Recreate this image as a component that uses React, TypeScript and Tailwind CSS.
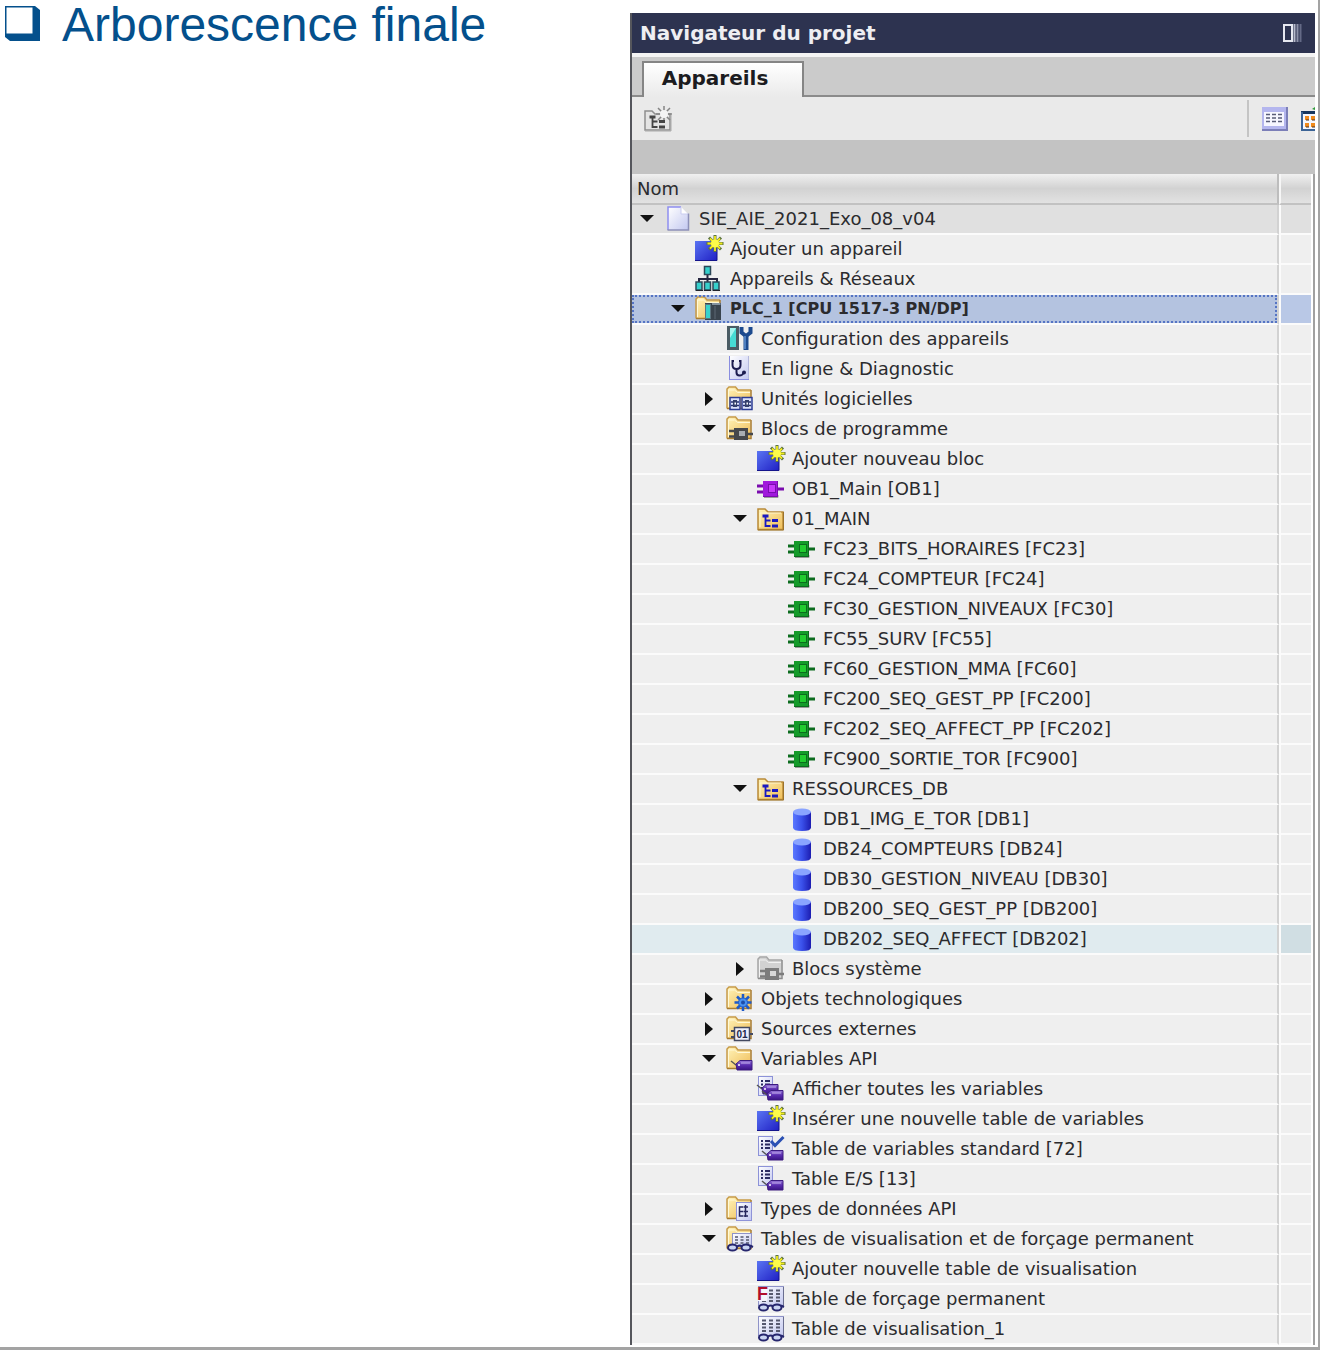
import { ReactNode, useState } from "react";
import clsx from "clsx";

type IconName =
  | "project"
  | "add"
  | "network"
  | "plc"
  | "config"
  | "diagnostic"
  | "units"
  | "blocks"
  | "ob"
  | "fc"
  | "db"
  | "group"
  | "system"
  | "techno"
  | "sources"
  | "tags"
  | "allTags"
  | "stdTable"
  | "tagTable"
  | "types"
  | "watchFolder"
  | "forceTable"
  | "watchTable";

interface TreeNode {
  name: string;
  icon: IconName;
  depth: number;
  arrow?: "open" | "closed";
}

const nodes: TreeNode[] = [
  { name: "SIE_AIE_2021_Exo_08_v04", icon: "project", depth: 0, arrow: "open" },
  { name: "Ajouter un appareil", icon: "add", depth: 1 },
  { name: "Appareils & Réseaux", icon: "network", depth: 1 },
  { name: "PLC_1 [CPU 1517-3 PN/DP]", icon: "plc", depth: 1, arrow: "open" },
  { name: "Configuration des appareils", icon: "config", depth: 2 },
  { name: "En ligne & Diagnostic", icon: "diagnostic", depth: 2 },
  { name: "Unités logicielles", icon: "units", depth: 2, arrow: "closed" },
  { name: "Blocs de programme", icon: "blocks", depth: 2, arrow: "open" },
  { name: "Ajouter nouveau bloc", icon: "add", depth: 3 },
  { name: "OB1_Main [OB1]", icon: "ob", depth: 3 },
  { name: "01_MAIN", icon: "group", depth: 3, arrow: "open" },
  { name: "FC23_BITS_HORAIRES [FC23]", icon: "fc", depth: 4 },
  { name: "FC24_COMPTEUR [FC24]", icon: "fc", depth: 4 },
  { name: "FC30_GESTION_NIVEAUX [FC30]", icon: "fc", depth: 4 },
  { name: "FC55_SURV [FC55]", icon: "fc", depth: 4 },
  { name: "FC60_GESTION_MMA [FC60]", icon: "fc", depth: 4 },
  { name: "FC200_SEQ_GEST_PP [FC200]", icon: "fc", depth: 4 },
  { name: "FC202_SEQ_AFFECT_PP [FC202]", icon: "fc", depth: 4 },
  { name: "FC900_SORTIE_TOR [FC900]", icon: "fc", depth: 4 },
  { name: "RESSOURCES_DB", icon: "group", depth: 3, arrow: "open" },
  { name: "DB1_IMG_E_TOR [DB1]", icon: "db", depth: 4 },
  { name: "DB24_COMPTEURS [DB24]", icon: "db", depth: 4 },
  { name: "DB30_GESTION_NIVEAU [DB30]", icon: "db", depth: 4 },
  { name: "DB200_SEQ_GEST_PP [DB200]", icon: "db", depth: 4 },
  { name: "DB202_SEQ_AFFECT [DB202]", icon: "db", depth: 4 },
  { name: "Blocs système", icon: "system", depth: 3, arrow: "closed" },
  { name: "Objets technologiques", icon: "techno", depth: 2, arrow: "closed" },
  { name: "Sources externes", icon: "sources", depth: 2, arrow: "closed" },
  { name: "Variables API", icon: "tags", depth: 2, arrow: "open" },
  { name: "Afficher toutes les variables", icon: "allTags", depth: 3 },
  { name: "Insérer une nouvelle table de variables", icon: "add", depth: 3 },
  { name: "Table de variables standard [72]", icon: "stdTable", depth: 3 },
  { name: "Table E/S [13]", icon: "tagTable", depth: 3 },
  { name: "Types de données API", icon: "types", depth: 2, arrow: "closed" },
  { name: "Tables de visualisation et de forçage permanent", icon: "watchFolder", depth: 2, arrow: "open" },
  { name: "Ajouter nouvelle table de visualisation", icon: "add", depth: 3 },
  { name: "Table de forçage permanent", icon: "forceTable", depth: 3 },
  { name: "Table de visualisation_1", icon: "watchTable", depth: 3 },
];

const indent = ["pl-0", "pl-[31px]", "pl-[62px]", "pl-[93px]", "pl-[124px]"];

// gradients shared by all the icons of the page
const IconDefs = () => (
  <svg className="absolute h-0 w-0" aria-hidden="true">
    <defs>
      <linearGradient id="gFolder" x1="0" y1="0" x2="1" y2="1">
        <stop offset="0" stopColor="#fff3b8" />
        <stop offset="1" stopColor="#efbd58" />
      </linearGradient>
      <linearGradient id="gBlue" x1="0" y1="0" x2="1" y2="1">
        <stop offset="0" stopColor="#5a74f2" />
        <stop offset="1" stopColor="#1f1fc4" />
      </linearGradient>
      <linearGradient id="gPage" x1="0" y1="0" x2="1" y2="1">
        <stop offset="0" stopColor="#ffffff" />
        <stop offset="1" stopColor="#c3c8f0" />
      </linearGradient>
      <linearGradient id="gDb" x1="0" y1="0" x2="1" y2="0">
        <stop offset="0" stopColor="#5a78ff" />
        <stop offset="0.5" stopColor="#3a50ea" />
        <stop offset="1" stopColor="#1c1cb0" />
      </linearGradient>
      <linearGradient id="gTag" x1="0" y1="0" x2="0" y2="1">
        <stop offset="0" stopColor="#9a7ad8" />
        <stop offset="0.5" stopColor="#5a2cb0" />
        <stop offset="1" stopColor="#3a1484" />
      </linearGradient>
    </defs>
  </svg>
);

const Folder = ({ gray }: { gray?: boolean }) => (
  <>
    <path d="M1.5 23V4l1.500-1.500h6L12 5.500h12.500V23z" fill={gray ? "#d2d2d2" : "url(#gFolder)"} />
    <path d="M1 23.500V4l2-2h6.500l2.500 3H25" fill="none" stroke={gray ? "#a5a5a5" : "#c79a45"} strokeWidth="1.500" />
    <path d="M2.500 22V5h6l3 2.500H24" fill="none" stroke={gray ? "#f2f2f2" : "#fff9d8"} />
    <path d="M25 5v18.500H1" fill="none" stroke={gray ? "#8c8c8c" : "#a97c30"} strokeWidth="1.500" />
  </>
);

const Chip = ({ dark, mid, light }: { dark: string; mid: string; light: string }) => (
  <>
    <path d="M0 11h7M0 17h7M20 14h7" stroke={dark} strokeWidth="3" />
    <path d="M7 22.500h14V20" fill="none" stroke="#9a9a9a" />
    <rect x="6" y="6" width="15" height="16" fill={dark} />
    <rect x="6" y="6" width="14" height="15" fill={mid} />
    <rect x="11.500" y="9.500" width="7" height="8" fill={light} stroke={dark} />
  </>
);

const SmallChip = ({ dark, light }: { dark: string; light: string }) => (
  <>
    <path d="M3 16h6M3 21.500h6M20 19h7" stroke={dark} strokeWidth="2.500" />
    <rect x="8" y="13" width="14" height="12" fill={dark} />
    <rect x="13" y="16" width="6" height="5" fill={light} />
  </>
);

const Star = () => (
  <>
    <path
      d="M20 0v17M11.500 8.500h17M14 2.500l12 12M26 2.500l-12 12"
      stroke="#5c7440"
      strokeWidth="3"
    />
    <path
      d="M20 1v15M12.500 8.500h15M15 3.500l10 10M25 3.500l-10 10"
      stroke="#f2ea1c"
      strokeWidth="1.800"
    />
    <circle cx="20" cy="8.500" r="4" fill="#fdfb4a" />
  </>
);

const Tag = ({ x, y }: { x: number; y: number }) => (
  <g transform={`translate(${x} ${y})`}>
    <path d="M-5 1l5 4" stroke="#555" strokeWidth="1.500" />
    <path d="M0 4l4-3.500h12V10H1z" fill="url(#gTag)" stroke="#3c1a80" />
    <path d="M5 3h9" stroke="#c4b0f0" />
    <circle cx="3" cy="5" r="1" fill="#fff" />
  </g>
);

const TagPage = () => (
  <>
    <rect x="1.500" y="1.500" width="14" height="19" fill="url(#gPage)" stroke="#8c92d8" />
    <path d="M4 6h2M8 6h5M4 9.500h2M8 9.500h5M4 13h2M8 13h5" stroke="#2a2a60" strokeWidth="1.800" />
  </>
);

const Glasses = () => (
  <g fill="#c9d4f2" stroke="#26266e" strokeWidth="2">
    <path d="M11 21.500q3-2 5 0M24 20.500l3 1.500" fill="none" />
    <ellipse cx="6.500" cy="22.500" rx="4.500" ry="3" />
    <ellipse cx="20" cy="22.500" rx="4.500" ry="3" />
  </g>
);

const GroupGlyph = ({ color }: { color: string }) => (
  <>
    <path d="M8.500 11v10h5M8.500 15.500h5" fill="none" stroke={color} strokeWidth="1.800" />
    <path d="M5.500 11h6M15 15.500h6M15 21h6" stroke={color} strokeWidth="3" />
  </>
);

const WatchPage = () => (
  <>
    <rect x="1.500" y="1.500" width="25" height="19" fill="url(#gPage)" stroke="#8f93c8" />
    <path d="M26.500 2v19" stroke="#6a6e90" />
    <path
      d="M5 5.500h4M12 5.500h4M19 5.500h4M5 9h4M12 9h4M19 9h4M5 12.500h4M12 12.500h4M19 12.500h4M5 16h4M12 16h4M19 16h4"
      stroke="#55586e"
      strokeWidth="1.800"
    />
  </>
);

const drawings: Record<IconName, ReactNode> = {
  project: (
    <>
      <path d="M4 2h13l7 7v16H4z" fill="url(#gPage)" />
      <path d="M4 25V2h13" fill="none" stroke="#8e8ff0" strokeWidth="1.500" />
      <path d="M17 2v7h7" fill="#fff" stroke="#c9ccf0" />
      <path d="M24.500 8.500V25H3.500" fill="none" stroke="#8d90b8" strokeWidth="1.500" />
    </>
  ),
  add: (
    <>
      <rect x="0" y="6" width="22" height="20" fill="url(#gBlue)" />
      <path d="M22 12v13.500H0" fill="none" stroke="#15158c" />
      <Star />
    </>
  ),
  network: (
    <>
      <path d="M12.500 10v7M4 17v-3h18v3" fill="none" stroke="#262640" strokeWidth="2" />
      <g fill="#36d0cc" stroke="#2c4858" strokeWidth="1.500">
        <rect x="9.500" y="1.500" width="6" height="8" />
        <rect x="1" y="17" width="6" height="8" />
        <rect x="9.500" y="17" width="6" height="8" />
        <rect x="18" y="17" width="6" height="8" />
      </g>
      <path d="M1 25.500h7M9 25.500h7M18 25.500h7" stroke="#20242c" />
    </>
  ),
  plc: (
    <>
      <Folder />
      <rect x="10" y="8" width="16" height="17" fill="#3a444e" />
      <rect x="10.500" y="9.500" width="5" height="14" fill="#38d2cc" stroke="#5c7480" />
      <path d="M17 9h8.500" stroke="#8593a0" strokeWidth="2" />
      <path d="M20 11v13" stroke="#5d6974" />
    </>
  ),
  config: (
    <>
      <rect x="1" y="1" width="12" height="24" fill="#4b5c64" />
      <rect x="4" y="3" width="6" height="19" fill="#46dcd4" />
      <path d="M4 3h6l-6 10z" fill="#a5f5ee" />
      <path d="M15.500 2v5.500L20 11l4.500-3.500V2" fill="none" stroke="#1d4a8e" strokeWidth="4" />
      <path d="M20 10v15" stroke="#1d4a8e" strokeWidth="5" />
      <path d="M19 11v13" stroke="#5f92d0" strokeWidth="1.500" />
    </>
  ),
  diagnostic: (
    <>
      <rect x="3" y="1" width="20" height="23" fill="url(#gPage)" />
      <path d="M3.500 1v23M3 24.500h20" stroke="#8a8ee0" />
      <path d="M22.500 1v23" stroke="#b4b8dc" />
      <path d="M8 6H6.500v4q0 4 4 4t4-4V6H13M10.500 14v3.500q0 3 3 3t4-2.500" fill="none" stroke="#1c1c50" strokeWidth="2" />
      <circle cx="18" cy="17.500" r="2" fill="#1c1c50" />
    </>
  ),
  units: (
    <>
      <Folder />
      <g fill="#dce2fa" stroke="#2c3c94" strokeWidth="1.500">
        <rect x="4" y="12.500" width="10" height="12" />
        <rect x="16" y="12.500" width="10" height="12" />
      </g>
      <path d="M5 17h8M5 20.500h8M17 17h8M17 20.500h8" stroke="#24306c" strokeWidth="1.500" />
      <path d="M7 15h4v7H7zM19 15h4v7h-4z" fill="#35406c" />
      <path d="M8.500 17.500h1.500v2H8.500zM20.500 17.500H22v2h-1.500z" fill="#fff" />
    </>
  ),
  blocks: (
    <>
      <Folder />
      <SmallChip dark="#46484c" light="#a9adb2" />
    </>
  ),
  ob: <Chip dark="#7a0cae" mid="#a018dc" light="#c838fa" />,
  fc: <Chip dark="#0c6c1e" mid="#149a2a" light="#22cc30" />,
  db: (
    <>
      <path d="M5 7v15.500q0 3.500 9 3.500t9-3.500V7z" fill="url(#gDb)" />
      <ellipse cx="14" cy="7" rx="9" ry="3.500" fill="#8aa4ff" />
    </>
  ),
  group: (
    <>
      <path d="M1 24.500V4h7l3 3h15v17.500z" fill="url(#gFolder)" stroke="#b98a38" strokeWidth="1.500" />
      <path d="M26.500 7v18H1" fill="none" stroke="#9c7228" />
      <path d="M3 22V8h21" fill="none" stroke="#fff6cc" />
      <GroupGlyph color="#1a1ac0" />
    </>
  ),
  system: (
    <>
      <Folder gray />
      <SmallChip dark="#7c7c7c" light="#d8d8d8" />
    </>
  ),
  techno: (
    <>
      <Folder />
      <path d="M17 9v17M8.500 17.500h17M11 11.500l12 12M23 11.500l-12 12" stroke="#1e5ac8" strokeWidth="2.500" />
      <circle cx="17" cy="17.500" r="4.500" fill="#4a92f0" stroke="#1e5ac8" />
      <circle cx="17" cy="17.500" r="2" fill="#1f4ea8" />
    </>
  ),
  sources: (
    <>
      <Folder />
      <path d="M5 16h4M5 22h4M23 19h4" stroke="#444a60" strokeWidth="2" />
      <rect x="8.500" y="12.500" width="15" height="13" fill="#eef0fa" stroke="#444a60" strokeWidth="1.500" />
      <text x="16" y="23" fontSize="10" fontWeight="700" fontFamily="Liberation Sans, sans-serif" textAnchor="middle" fill="#22284c">
        01
      </text>
    </>
  ),
  tags: (
    <>
      <Folder />
      <Tag x={10} y={15} />
    </>
  ),
  allTags: (
    <>
      <TagPage />
      <Tag x={5} y={9} />
      <Tag x={10} y={15} />
    </>
  ),
  stdTable: (
    <>
      <TagPage />
      <path d="M14 6l4 4.500L26.500 2" fill="none" stroke="#2a50b4" strokeWidth="3" />
      <Tag x={10} y={15} />
    </>
  ),
  tagTable: (
    <>
      <TagPage />
      <Tag x={10} y={15} />
    </>
  ),
  types: (
    <>
      <Folder />
      <rect x="10.500" y="7.500" width="15" height="18" fill="url(#gPage)" stroke="#8f93d8" />
      <path d="M17 12h-3.500v9H17M13.500 16.500H17" fill="none" stroke="#26265c" strokeWidth="1.500" />
      <path d="M17.500 12H22M17.500 16.500H22M17.500 21H22M19.500 10v12" stroke="#26265c" strokeWidth="1.500" />
    </>
  ),
  watchFolder: (
    <>
      <Folder />
      <rect x="6.500" y="8.500" width="19" height="13" fill="url(#gPage)" stroke="#8f93c8" />
      <path d="M9 12h3M14.500 12h3M20 12h3M9 15h3M14.500 15h3M20 15h3M9 18h3M14.500 18h3M20 18h3" stroke="#55586e" strokeWidth="1.500" />
      <Glasses />
    </>
  ),
  forceTable: (
    <>
      <WatchPage />
      <rect x="1" y="2" width="9" height="14" fill="#f4f4fc" />
      <text x="0" y="15" fontSize="18" fontWeight="700" fontFamily="Liberation Sans, sans-serif" fill="#b00c2c">
        F
      </text>
      <Glasses />
    </>
  ),
  watchTable: (
    <>
      <WatchPage />
      <Glasses />
    </>
  ),
};

const Icon = ({ name }: { name: IconName }) => (
  <svg viewBox="0 0 28 28" className="h-7 w-7 shrink-0 overflow-visible" aria-hidden="true">
    {drawings[name]}
  </svg>
);

const App = () => {
  const [closed, setClosed] = useState<string[]>([]);
  const [selected, setSelected] = useState("PLC_1 [CPU 1517-3 PN/DP]");

  const toggle = (name: string) => {
    setClosed(closed.includes(name) ? closed.filter((n) => n !== name) : [...closed, name]);
  };

  // hide every node that sits below a closed one
  let hiddenBelow = Infinity;
  const visible = nodes.filter((node) => {
    if (node.depth > hiddenBelow) return false;
    hiddenBelow = closed.includes(node.name) ? node.depth : Infinity;
    return true;
  });

  return (
    <main className="grid grid-cols-[630fr_688fr] border-r-2 border-b-3 border-[#a3a3a3] bg-white pb-[2px] font-['DejaVu_Sans',sans-serif] text-[#2b2b2e]">
      <IconDefs />

      <section className="pl-1">
        <h1 className="flex items-start gap-[21px] font-['Liberation_Sans',Arial,sans-serif] text-[48px] leading-[50px] text-[#04508c]">
          <svg viewBox="0 0 37 36" className="mt-[5px] h-9 w-[37px] shrink-0" aria-hidden="true">
            <path d="M1 1h30l5 4v31H6l-5-4z" fill="#04508c" />
            <path d="M2.500 2.500h26v26h-26z" fill="#fff" />
          </svg>
          Arborescence finale
        </h1>
      </section>

      <section className="mt-[13px] mr-[3px] border-l-2 border-[#55565c]">
        <header className="flex h-10 items-center justify-between bg-[#2d3350] pr-3 pl-2 text-white">
          <h2 className="text-[20px] leading-6 font-bold text-[#eeeef2]">Navigateur du projet</h2>
          <button type="button" aria-label="Réduire">
            <svg viewBox="0 0 20 18" className="h-[18px] w-5">
              <rect x="1" y="1" width="8" height="16" fill="#2d3350" stroke="#e6e8f0" strokeWidth="2" />
              <path d="M11.500 0v18" stroke="#b6bacb" strokeWidth="2" />
              <path d="M14.500 0v18" stroke="#8c91a8" strokeWidth="2" />
              <path d="M17.500 0v18" stroke="#646a86" strokeWidth="2" />
            </svg>
          </button>
        </header>

        <div role="tablist" className="flex h-11 items-end border-t-4 border-[#f4f4f4] bg-[#cbcbcb]">
          <div className="w-[10px] self-stretch border-b-2 border-[#8b8b8b]" />
          <button
            type="button"
            role="tab"
            aria-selected="true"
            className="h-9 w-[162px] border-2 border-b-0 border-[#858585] bg-linear-to-b from-white to-[#eaeaea] pr-4 pb-1 text-[20px] leading-7 font-bold text-[#1c1c20]"
          >
            Appareils
          </button>
          <div className="flex-1 self-stretch border-b-2 border-[#8b8b8b]" />
        </div>

        <div className="flex h-[43px] items-center overflow-hidden bg-[#eaeaea] pl-3">
          <button type="button" aria-label="Nouveau groupe">
            <svg viewBox="0 0 28 26" className="h-[26px] w-7">
              <path d="M1 24V5h7l3 3h15v16z" fill="#e4e4e4" stroke="#8e8e8e" strokeWidth="1.500" />
              <path d="M27 9v16H1" fill="none" stroke="#aaa" />
              <path d="M20 0v16M12 8h16M14 2l12 12M26 2L14 14" stroke="#858585" strokeWidth="1.500" />
              <circle cx="20" cy="8" r="4" fill="#f4f4f4" />
              <GroupGlyph color="#444" />
            </svg>
          </button>
          <div className="mr-[13px] ml-auto h-[37px] w-[2px] bg-[#c4c4c4]" />
          <button type="button" aria-label="Vue détaillée">
            <svg viewBox="0 0 26 24" className="h-6 w-[26px]">
              <rect x="0" y="0" width="26" height="24" fill="#7c7fb8" />
              <rect x="0" y="0" width="24" height="22" fill="#b4b6ee" />
              <rect x="2" y="5" width="20" height="14" fill="#f6f6ff" />
              <path d="M4 7.500h4M10 7.500h4M16 7.500h4M4 11h4M10 11h4M16 11h4M4 14.500h4M10 14.500h4M16 14.500h4" stroke="#585c78" strokeWidth="1.500" />
            </svg>
          </button>
          <button type="button" aria-label="Vue d'ensemble" className="ml-[13px]">
            <svg viewBox="0 0 14 26" className="h-[26px] w-[14px]">
              <path d="M14 1l-3 2 3 1z" fill="#2f9a3a" />
              <rect x="1" y="5" width="13" height="20" fill="#f4f6fc" />
              <path d="M0 6.500h14" stroke="#17365e" strokeWidth="3" />
              <path d="M1 6v19M0 24h14" stroke="#3c6496" strokeWidth="2" />
              <path d="M4 12h4M10 12h4M4 19h4M10 19h4" stroke="#f08a1c" strokeWidth="4" />
              <path d="M5 14h3M11 14h3M5 21h3M11 21h3" stroke="#4a3020" />
            </svg>
          </button>
        </div>

        <div className="h-[34px] bg-[#c3c3c3]" />

        <div className="border-r-2 border-[#a0a0a0] bg-white pr-[2px]">
          <table className="w-full table-fixed border-separate border-spacing-0 text-[18px] leading-7">
            <colgroup>
              <col />
              <col className="w-[32px]" />
            </colgroup>
            <thead>
              <tr>
                <th
                  scope="col"
                  className="h-[31px] border-r-2 border-b-2 border-r-[#bdbdbd] border-b-[#c2c2c2] bg-linear-to-b from-[#f0f0f0] via-[#d2d2d2] to-[#e2e2e2] p-0 pl-[5px] text-left font-normal"
                >
                  Nom
                </th>
                <th className="border-b-2 border-l-2 border-b-[#c2c2c2] border-l-[#f6f6f6] bg-linear-to-b from-[#f0f0f0] via-[#d2d2d2] to-[#e2e2e2] p-0" />
              </tr>
            </thead>
            <tbody>
              {visible.map((node) => {
                const isSelected = node.name === selected;
                const isHovered = node.icon === "db" && node.name.startsWith("DB202");
                const color = isSelected
                  ? "bg-[#b4c3e0]"
                  : isHovered
                    ? "bg-[#e0ebef]"
                    : node.depth === 0
                      ? "bg-[#e0e0e0]"
                      : "bg-[#efefef]";
                return (
                  <tr key={node.name} onClick={() => setSelected(node.name)}>
                    <td
                      className={clsx(
                        "h-[30px] border-r-2 border-b-2 border-r-[#d2d2d2] border-b-[#fbfbfb] p-0",
                        color
                      )}
                    >
                      <div
                        className={clsx(
                          "flex h-7 items-center whitespace-nowrap",
                          indent[node.depth],
                          isSelected && "text-[16px] font-bold outline-2 -outline-offset-2 outline-[#5574c4] outline-dotted"
                        )}
                      >
                        {node.arrow ? (
                          <button
                            type="button"
                            aria-label={node.name}
                            className="flex h-7 w-[30px] items-center justify-center"
                            onClick={() => toggle(node.name)}
                          >
                            <svg viewBox="0 0 14 14" className="h-[14px] w-[14px]">
                              {node.arrow === "closed" || closed.includes(node.name) ? (
                                <path d="M3 0l8 7-8 7z" fill="#111" />
                              ) : (
                                <path d="M0 3h14l-7 7z" fill="#111" />
                              )}
                            </svg>
                          </button>
                        ) : (
                          <span className="w-[30px]" />
                        )}
                        <span className="mr-[7px] ml-[2px] flex">
                          <Icon name={node.icon} />
                        </span>
                        {node.name}
                      </div>
                    </td>
                    <td
                      className={clsx(
                        "border-b-2 border-l-2 border-[#fbfbfb] p-0",
                        isSelected ? "bg-[#b9c8e6]" : isHovered ? "bg-[#d0dee3]" : color
                      )}
                    />
                  </tr>
                );
              })}
            </tbody>
          </table>
        </div>
      </section>
    </main>
  );
};

export default App;
